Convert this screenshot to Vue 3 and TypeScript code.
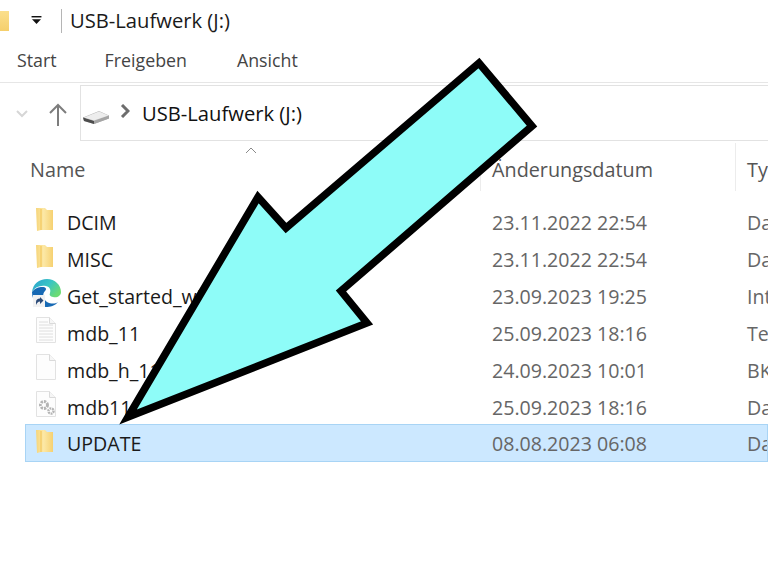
<script setup lang="ts">
interface Row {
  name: string
  date: string
  type: string
  icon: 'folder' | 'edge' | 'text' | 'blank' | 'gear'
  selected?: boolean
}

const rows: Row[] = [
  { name: 'DCIM', date: '23.11.2022 22:54', type: 'Da', icon: 'folder' },
  { name: 'MISC', date: '23.11.2022 22:54', type: 'Da', icon: 'folder' },
  { name: 'Get_started_with_Edge', date: '23.09.2023 19:25', type: 'Int', icon: 'edge' },
  { name: 'mdb_11', date: '25.09.2023 18:16', type: 'Te', icon: 'text' },
  { name: 'mdb_h_11', date: '24.09.2023 10:01', type: 'BK', icon: 'blank' },
  { name: 'mdb11', date: '25.09.2023 18:16', type: 'Da', icon: 'gear' },
  { name: 'UPDATE', date: '08.08.2023 06:08', type: 'Da', icon: 'folder', selected: true },
]
const tabs = ['Start', 'Freigeben', 'Ansicht']
</script>

<template>
  <div class="window">
    <header class="titlebar">
      <svg class="title-folder" viewBox="0 0 9 20">
        <defs>
          <linearGradient id="tf" x1="0" x2="0" y1="0" y2="1">
            <stop offset="0" stop-color="#fbdf8c" />
            <stop offset="1" stop-color="#f5cf6c" />
          </linearGradient>
        </defs>
        <rect width="9" height="20" fill="url(#tf)" />
      </svg>
      <svg class="qa-caret" viewBox="0 0 12 10"><rect x="0.500" y="0" width="11" height="1.600" fill="#111" /><path d="M1 3.500h10L6 9z" fill="#111" /></svg>
      <span class="title-sep"></span>
      <span class="title">USB-Laufwerk (J:)</span>
    </header>
    <nav class="tabs">
      <span v-for="t in tabs" :key="t" class="tab">{{ t }}</span>
    </nav>
    <div class="navrow">
      <div class="nav-buttons">
        <svg class="down" viewBox="0 0 12 8"><path d="M1 1l5 5 5-5" fill="none" stroke="#d6d6d6" stroke-width="2" /></svg>
        <svg class="up" viewBox="0 0 20 24"><path d="M10 23V2M2 10l8-8 8 8" fill="none" stroke="#7d7d7d" stroke-width="2" /></svg>
      </div>
      <div class="address">
        <svg class="drive" viewBox="0 0 26 13">
          <path d="M0 6.500L16 0l10 4.500v3L11 13 1 10z" fill="#b5b5b5" />
          <path d="M0 6.500L11 10v3L1 10z" fill="#4d4d4d" />
          <path d="M11 10l15-5.500v3L11 13z" fill="#a5a5a5" />
          <path d="M1 6.500L16 .5l9.500 4L11 9.500z" fill="#ededed" />
        </svg>
        <svg class="crumb" viewBox="0 0 10 14"><path d="M2 1l6 6-6 6" fill="none" stroke="#6d6d6d" stroke-width="3" /></svg>
        <span class="address-text">USB-Laufwerk (J:)</span>
      </div>
    </div>
    <div class="colhead">
      <svg class="sort" viewBox="0 0 12 7"><path d="M1 6l5-5 5 5" fill="none" stroke="#8a8a8a" stroke-width="1" /></svg>
      <span class="h-name">Name</span>
      <span class="h-date">Änderungsdatum</span>
      <span class="h-type">Ty</span>
    </div>
    <ul class="rows">
      <li v-for="r in rows" :key="r.name" class="row" :class="{ selected: r.selected }">
        <span class="icon">
          <svg v-if="r.icon === 'folder'" class="ic" viewBox="0 0 30 30">
            <defs>
              <linearGradient id="fg" x1="0" x2="1" y1="0" y2="0">
                <stop offset="0" stop-color="#f6d57a" />
                <stop offset="0.45" stop-color="#fce8a6" />
                <stop offset="1" stop-color="#f6d171" />
              </linearGradient>
            </defs>
            <path d="M4 4h9l2 2h6v20H9l-4 1z" fill="url(#fg)" />
            <path d="M8 5h2v21H8z" fill="#f3c85f" opacity="0.6" />
          </svg>
          <svg v-else-if="r.icon === 'edge'" class="ic" viewBox="0 0 30 30">
            <defs>
              <linearGradient id="eg" x1="0" x2="1" y1="0" y2="0.600">
                <stop offset="0" stop-color="#2a9fd0" />
                <stop offset="0.550" stop-color="#39c5c4" />
                <stop offset="1" stop-color="#6bdb74" />
              </linearGradient>
            </defs>
            <path d="M0 14C1 6 7 1 15 1c8 0 14 6 14 13 0 4-4 6-8 5-3-.5-4-2-3-4 1-3 0-6-4-7C8 7 3 9 0 14z" fill="url(#eg)" />
            <path d="M0 14c3-4 7-5 10-5 4 0 5 2 3 4-3 3-2 8 2 11 4 2 8 2 11 0-3 4-8 5-12 5C6 29 0 23 0 14z" fill="#1769b4" />
            <rect x="1" y="17" width="12" height="12" fill="#f2f2f2" />
            <path d="M4 27v-3c0-2 1.500-3.500 4-3.500V19l3.500 3.500L8 26v-2.500c-2 0-3 1.500-4 3.500z" fill="#2a4a78" />
          </svg>
          <svg v-else class="ic" viewBox="0 0 30 30">
            <path d="M4.500 2.500h13l6 6v19h-19z" fill="#fdfdfd" stroke="#e2e2e2" />
            <path d="M17.500 2.500v6h6" fill="#f6f6f6" stroke="#dadada" />
            <path v-if="r.icon === 'text'" d="M7 7h9M7 10h14M7 13h14M7 16h14M7 19h14M7 22h14M7 25h14" stroke="#dedede" stroke-width="1" />
            <g v-if="r.icon === 'gear'" fill="none" stroke="#b4b4b4">
              <circle cx="12" cy="16" r="3.500" stroke-width="3" stroke-dasharray="2.200 1" />
              <circle cx="19" cy="22" r="2.600" stroke-width="2.400" stroke-dasharray="1.800 .8" />
            </g>
          </svg>
        </span>
        <span class="name">{{ r.name }}</span>
        <span class="date">{{ r.date }}</span>
        <span class="type">{{ r.type }}</span>
      </li>
    </ul>
    <svg class="arrow" viewBox="0 0 768 575">
      <path d="M128 417L258 197L286 228L479 63L532 126L341 291L367 323Z" fill="#8efcf8" stroke="#000" stroke-width="7.500" stroke-linejoin="miter" stroke-miterlimit="10" />
    </svg>
  </div>
</template>

<style scoped>
.window {
  position: relative;
  width: 768px;
  height: 575px;
  overflow: hidden;
  background: #fff;
  font-family: "Open Sans", "Noto Sans", sans-serif;
  color: #1a1a1a;
}
.titlebar {
  display: flex;
  align-items: center;
  height: 41px;
}
.title-folder {
  width: 9px;
  height: 20px;
}
.qa-caret {
  width: 11px;
  height: 9px;
  margin-left: 22px;
}
.title-sep {
  width: 1px;
  height: 24px;
  margin-left: 19px;
  background: #b5b5b5;
}
.title {
  margin-left: 8px;
  margin-top: -1px;
  font-size: 20.2px;
}
.tabs {
  display: flex;
  align-items: center;
  height: 38px;
  padding-left: 17px;
  padding-bottom: 3px;
  border-bottom: 1px solid #e6e6e6;
  font-size: 17.8px;
  color: #444;
}
.tab:nth-child(2) { margin-left: 48px; }
.tab:nth-child(3) { margin-left: 50px; }
.navrow {
  display: flex;
  height: 56px;
  margin-top: 2px;
}
.nav-buttons {
  display: flex;
  align-items: center;
  width: 80px;
  padding-left: 16px;
  box-sizing: border-box;
}
.down { width: 12px; height: 8px; margin-top: 2px; }
.up { width: 20px; height: 24px; margin-left: 20px; margin-top: 4px; }
.address {
  flex: 1;
  display: flex;
  align-items: center;
  border: 1px solid #e2e2e2;
  border-right: 0;
  padding-left: 2px;
}
.drive { width: 26px; height: 13px; margin-top: 8px; }
.crumb { width: 10px; height: 14px; margin-left: 11px; margin-top: -4px; }
.address-text {
  margin-left: 12px;
  font-size: 20.2px;
  color: #111;
}
.colhead {
  position: relative;
  display: grid;
  grid-template-columns: 462px 255px 1fr;
  height: 56px;
  padding-bottom: 6px;
  align-items: center;
  padding-left: 30px;
  font-size: 19.8px;
  color: #555;
}
.h-date, .h-type { position: relative; }
.h-date::before, .h-type::before {
  content: "";
  position: absolute;
  left: -12px;
  top: -13px;
  height: 48px;
  width: 1px;
  background: #ececec;
}
.sort {
  position: absolute;
  left: 245px;
  top: 6px;
  width: 12px;
  height: 7px;
}
.rows {
  list-style: none;
  margin: 0;
  padding: 0;
  font-size: 19.6px;
}
.row {
  display: grid;
  grid-template-columns: 42px 425px 255px 1fr;
  align-items: center;
  height: 37px;
  margin-left: 25px;
  white-space: nowrap;
  overflow: hidden;
}
.row.selected {
  height: 38px;
  margin-top: -1px;
  background: #cce8ff;
  outline: 1px solid #a8d4f5;
  outline-offset: -1px;
}
.icon { display: flex; padding-left: 7px; margin-top: -5px; }
.ic { width: 30px; height: 30px; flex: none; }
.name { color: #1a1a1a; overflow: hidden; margin-top: 1px; }
.date { color: #666; margin-top: 1px; }
.type { color: #666; margin-top: 1px; }
.arrow {
  position: absolute;
  inset: 0;
  width: 768px;
  height: 575px;
  pointer-events: none;
}
</style>
